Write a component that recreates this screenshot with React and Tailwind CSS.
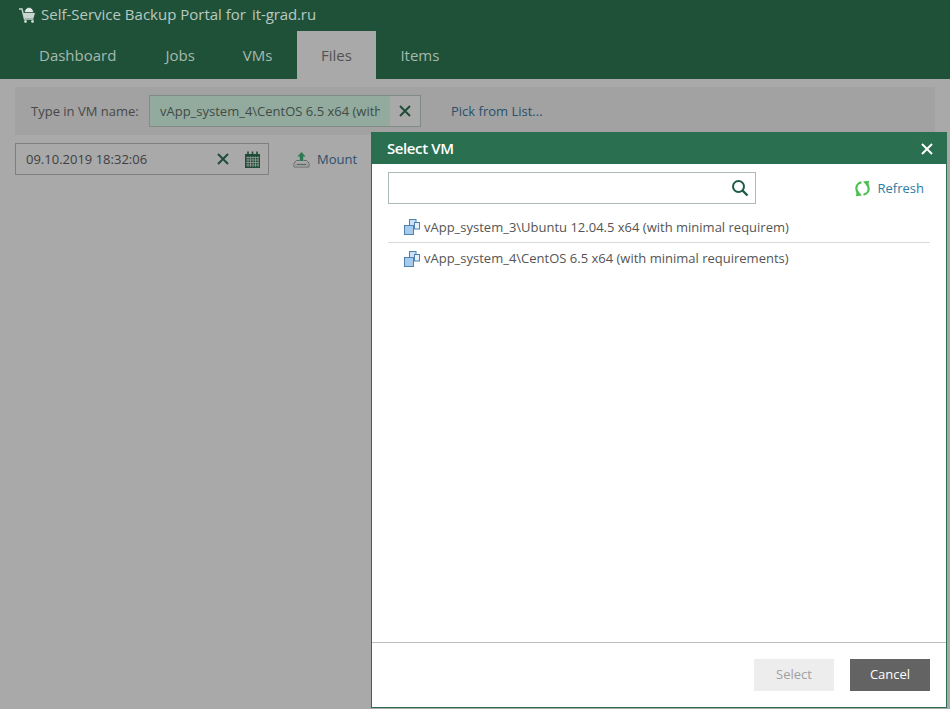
const font = { fontFamily: '"Open Sans", sans-serif' };

function Cart() {
  return (
    <svg width="20" height="20" viewBox="0 0 20 20" className="shrink-0">
      <path d="M1 4h3l2.500 10h9" fill="none" stroke="#c8d6cf" strokeWidth="1.400" />
      <path d="M5 8h12l-1.500 5H6.500z" fill="#c8d6cf" />
      <path d="M6.500 7.500a4.500 5 0 0 1 9 0z" fill="#e4eae7" stroke="#1f5138" strokeWidth="0.600" />
      <circle cx="7.500" cy="16.500" r="1.400" fill="#c8d6cf" />
      <circle cx="14.500" cy="16.500" r="1.400" fill="#c8d6cf" />
    </svg>
  );
}

function XIcon({ color = "#1f4d38", size = 12, w = 2 }) {
  return (
    <svg width={size} height={size} viewBox="0 0 12 12" className="shrink-0">
      <path d="M1 1l10 10M11 1L1 11" stroke={color} strokeWidth={w} fill="none" />
    </svg>
  );
}

function CalendarIcon() {
  return (
    <svg width="17" height="17" viewBox="0 0 17 17" className="shrink-0">
      <path d="M1 3h15v14H1z" fill="#1f4d38" />
      <path d="M4 0.500v4M8.500 0.500v4M13 0.500v4" stroke="#1f4d38" strokeWidth="1.600" />
      <path d="M2 6.500h13M2 9h13M2 11.500h13M2 14h13M4 5.500v10.500M6.500 5.500v10.500M9 5.500v10.500M11.500 5.500v10.500M14 5.500v10.500" stroke="#a5a5a5" strokeWidth="0.700" />
    </svg>
  );
}

function MountIcon() {
  return (
    <svg width="17" height="17" viewBox="0 0 17 17" className="shrink-0">
      <path d="M8.500 1L12.500 5.500H10.200V10H6.800V5.500H4.500z" fill="#2c7a4f" />
      <path d="M3.500 9.500h3M10.500 9.500h3M3.500 9.500L1 12v4h15v-4l-2.500-2.500" fill="none" stroke="#5f6a66" strokeWidth="1" />
      <path d="M1.500 12h14v3.500h-14z" fill="#9c9c9c" />
      <path d="M4 13.500h9" stroke="#5f6a66" strokeWidth="1" />
    </svg>
  );
}

function VmIcon() {
  return (
    <svg width="16" height="16" viewBox="0 0 16 16" className="shrink-0">
      <rect x="5.500" y="0.500" width="6.500" height="7" fill="#cfe2f5" stroke="#4d83b3" />
      <rect x="10.500" y="3.500" width="5" height="6.500" fill="#e6f0fa" stroke="#4d83b3" />
      <rect x="0.500" y="6.500" width="9" height="9" fill="#a8cbec" stroke="#4d83b3" />
    </svg>
  );
}

function SearchIcon() {
  return (
    <svg width="18" height="18" viewBox="0 0 18 18" className="shrink-0">
      <circle cx="7.500" cy="7.500" r="5.500" fill="none" stroke="#1f5b45" strokeWidth="2" />
      <path d="M11.500 11.500L16.500 16.500" stroke="#1f5b45" strokeWidth="2.400" />
    </svg>
  );
}

function RefreshIcon() {
  return (
    <svg width="15" height="17" viewBox="0 0 15 17" className="shrink-0">
      <path d="M6.500 2.400C3.500 2.800 1.300 5.300 1.300 8.500c0 2 .7 3.500 2.200 4.500" fill="none" stroke="#4cc04f" strokeWidth="2.200" />
      <path d="M8.500 14.600c3-.4 5.200-2.900 5.200-6.100 0-2-.7-3.500-2.200-4.500" fill="none" stroke="#4cc04f" strokeWidth="2.200" />
      <path d="M14 0.800L8 1.600 13.200 7.200zM1 16.200L7 15.400 1.800 9.800z" fill="#4cc04f" />
    </svg>
  );
}

export default function App() {
  return (
    <div style={font} className="relative h-[709px] w-[950px] overflow-hidden bg-[#a9a9a9] text-[13px]">
      <header className="h-[79px] bg-[#1f5138]">
        <div className="flex h-[31px] items-center gap-[3px] pb-[2px] pl-[18px] text-[15px] text-[#b9c9c1]">
          <Cart />
          <span>Self-Service Backup Portal for</span>
          <span className="ml-[3px] tracking-[-0.1px]">it-grad.ru</span>
        </div>
        <nav className="flex h-[48px] pl-[15px] text-[15px] text-[#a5b9af]">
          <div className="flex items-center pl-[24px] pr-[25px]">Dashboard</div>
          <div className="flex items-center pl-[24px] pr-[24px]">Jobs</div>
          <div className="flex items-center pl-[24px] pr-[25px]">VMs</div>
          <div className="flex w-[79px] items-center justify-center bg-[#a9a9a9] pr-[1px] text-[#525252]">Files</div>
          <div className="flex items-center px-[24px]">Items</div>
        </nav>
      </header>

      <main className="px-[15px] pt-[8px]">
        <div className="flex h-[48px] items-center bg-[#a2a2a2] pl-[16px] text-[#484848]">
          <span className="w-[118px] shrink-0 pt-[2px]">Type in VM name:</span>
          <div className="flex h-[32px] w-[272px] items-stretch border border-[#7f8c86] bg-[#a9a9a9]">
            <div className="w-[240px] bg-[#93aa9e] pl-[10px] pr-[10px]">
              <div className="overflow-hidden whitespace-nowrap leading-[31px] text-[#414c46]">
                vApp_system_4\CentOS 6.5 x64 (with minimal requirements)
              </div>
            </div>
            <div className="flex flex-1 items-center justify-center">
              <XIcon />
            </div>
          </div>
          <span className="ml-[30px] pt-[2px] text-[#29506b]">Pick from List...</span>
        </div>

        <div className="mt-[8px] flex items-center">
          <div className="flex h-[32px] w-[254px] items-center border border-[#7f7f7f] pl-[10px] text-[#404040]">
            <span className="flex-1 pt-[2px]">09.10.2019 18:32:06</span>
            <XIcon />
            <span className="ml-[15px] mr-[7px]"><CalendarIcon /></span>
          </div>
          <div className="ml-[24px] flex items-center gap-[7px] text-[#29506b]">
            <MountIcon />
            <span className="pt-[2px]">Mount</span>
          </div>
        </div>
      </main>

      <div className="absolute left-[371px] top-[132px] flex h-[576px] w-[576px] flex-col border border-[#2a6f50] bg-white">
        <div className="flex h-[31px] shrink-0 items-center justify-between bg-[#2a6f50] pl-[15px] pr-[13px] text-[15px] font-semibold tracking-[-0.4px] text-white">
          <span>Select VM</span>
          <XIcon color="#ffffff" size={12} w={2} />
        </div>
        <div className="flex-1 px-[16px] pt-[8px]">
          <div className="flex items-center justify-between">
            <div className="flex h-[32px] w-[368px] items-center justify-end border border-[#a9bdb4] pr-[6px]">
              <SearchIcon />
            </div>
            <div className="mr-[6px] flex items-center gap-[8px] text-[#2b7da3]">
              <RefreshIcon />
              <span className="pt-[2px]">Refresh</span>
            </div>
          </div>
          <ul className="mt-[8px] text-[#555555]">
            <li className="flex h-[31px] items-center gap-[4px] border-b border-[#d9d9d9] pl-[16px]">
              <VmIcon />
              <span className="pt-[2px]">vApp_system_3\Ubuntu 12.04.5 x64 (with minimal requirem)</span>
            </li>
            <li className="flex h-[31px] items-center gap-[4px] pl-[16px]">
              <VmIcon />
              <span>vApp_system_4\CentOS 6.5 x64 (with minimal requirements)</span>
            </li>
          </ul>
        </div>
        <div className="flex h-[65px] shrink-0 items-center justify-end gap-[16px] border-t border-[#bdbdbd] pr-[16px]">
          <button className="h-[32px] w-[80px] bg-[#ededed] text-[#a0a0a0]">Select</button>
          <button className="h-[32px] w-[80px] bg-[#636363] text-white">Cancel</button>
        </div>
      </div>
    </div>
  );
}
